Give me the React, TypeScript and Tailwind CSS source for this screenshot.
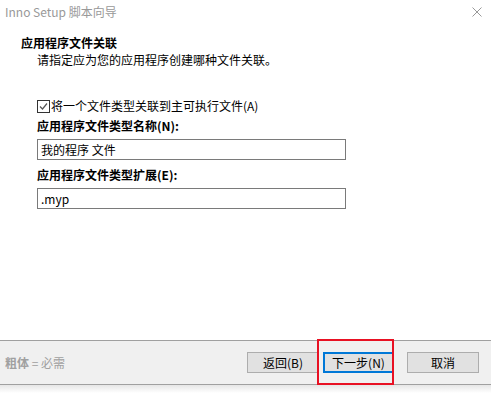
import React from 'react'

const font = { fontFamily: '"Microsoft YaHei", "Noto Sans CJK SC", "Noto Sans", sans-serif' }

function Field({ label, hotkey, value }: { label: string; hotkey: string; value: string }) {
	return (
		<div className="flex flex-col">
			<div className="text-[12px] leading-[16px] font-bold text-black">
				{label}({hotkey}):
			</div>
			<div className="mt-[5px] w-[309px] h-[21px] border border-[#7a7a7a] bg-white flex items-center pl-[3px] text-[12px] leading-[16px] text-black">
				{value}
			</div>
		</div>
	)
}

function WinButton({ children, focused }: { children: React.ReactNode; focused?: boolean }) {
	return (
		<button
			className={
				focused
					? 'w-[71px] h-[21px] bg-[#e1e1e1] border-2 border-[#0078d7] text-[12px] leading-[16px] text-black flex items-center justify-center'
					: 'w-[72px] h-[21px] bg-[#e1e1e1] border border-[#adadad] text-[12px] leading-[16px] text-black flex items-center justify-center'
			}
		>
			{children}
		</button>
	)
}

export default function App() {
	return (
		<div className="w-[491px] h-[393px] bg-white flex flex-col relative overflow-hidden" style={font}>
			{/* Title bar */}
			<div className="h-[24px] flex items-center justify-between pl-[5px] pr-[9px]">
				<span className="text-[12px] leading-[16px] text-[#999999]">Inno Setup 脚本向导</span>
				<svg width="10" height="10" viewBox="0 0 10 10" className="block">
					<path d="M0.5 0.5 L9.5 9.5 M9.5 0.5 L0.5 9.5" stroke="#999999" strokeWidth="1" fill="none" />
				</svg>
			</div>

			{/* Header */}
			<div className="mt-[11px] pl-[21px] text-[12px] leading-[16px] font-bold text-black">应用程序文件关联</div>
			<div className="mt-[1px] pl-[37px] text-[12px] leading-[16px] text-black">请指定应为您的应用程序创建哪种文件关联。</div>

			{/* Body */}
			<div className="mt-[30px] pl-[37px] flex flex-col">
				<div className="flex items-center gap-[1px] h-[16px]">
					<div className="w-[13px] h-[13px] border border-[#333333] bg-white flex items-center justify-center">
						<svg width="9" height="9" viewBox="0 0 9 9">
							<path d="M1 4.5 L3.5 7 L8 1.5" stroke="#555555" strokeWidth="1.2" fill="none" />
						</svg>
					</div>
					<span className="text-[12px] leading-[16px] text-black">将一个文件类型关联到主可执行文件(A)</span>
				</div>
				<div className="mt-[4px]">
					<Field label="应用程序文件类型名称" hotkey="N" value="我的程序 文件" />
				</div>
				<div className="mt-[7px]">
					<Field label="应用程序文件类型扩展" hotkey="E" value=".myp" />
				</div>
			</div>

			<div className="flex-1" />

			{/* Footer */}
			<div className="h-[45px] bg-[#f0f0f0] border-t border-b border-[#a0a0a0] flex items-center pl-[5px] pr-[12px]">
				<span className="text-[12px] leading-[16px] text-[#a0a0a0]">
					<b>粗体</b> = 必需
				</span>
				<div className="flex-1" />
				<div className="flex items-center">
					<WinButton>返回(B)</WinButton>
					<div className="ml-[4px]">
						<WinButton focused>下一步(N)</WinButton>
					</div>
					<div className="ml-[13px]">
						<WinButton>取消</WinButton>
					</div>
				</div>
			</div>
			<div className="h-[8px] bg-gradient-to-b from-[#e6e6e6] to-white" />

			{/* Annotation overlay */}
			<div className="absolute left-[317px] top-[339px] w-[77px] h-[46px] border-2 border-[#e81123] pointer-events-none" />
		</div>
	)
}
